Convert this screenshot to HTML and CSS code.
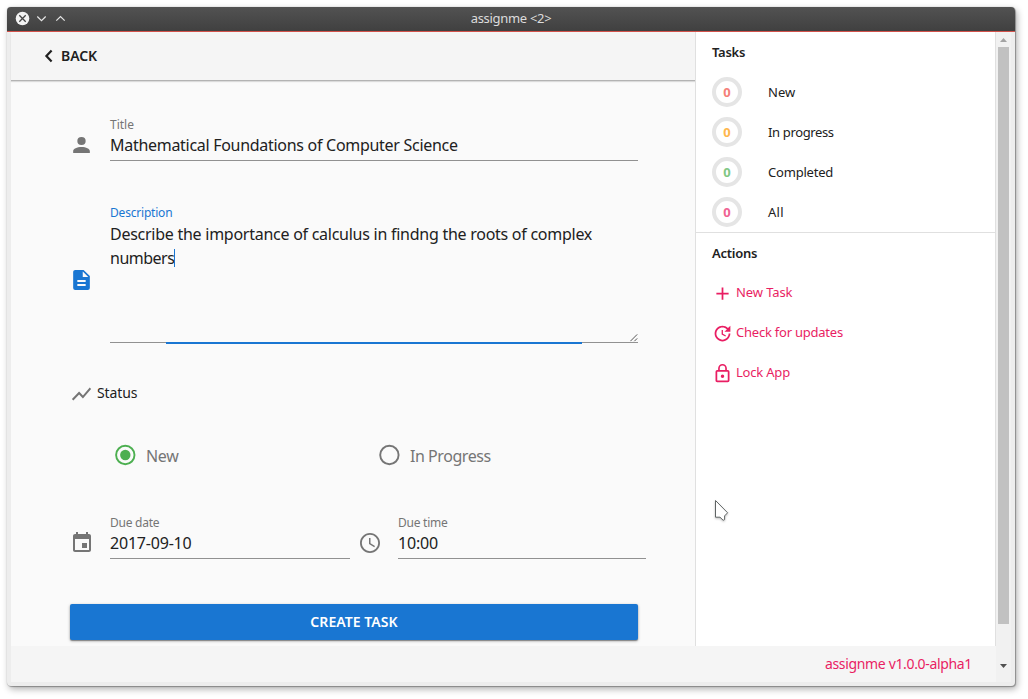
FILE: index.html
```html
<!DOCTYPE html>
<html lang="en">
<head>
<meta charset="utf-8">
<title>assignme</title>
<link rel="stylesheet" href="styles.css">
</head>
<body>
<div class="window">
  <div class="titlebar">
    <svg class="window-controls" width="60" height="24" viewBox="0 0 60 24">
      <circle cx="11.5" cy="11.5" r="6.8" fill="#f2f2f2"/>
      <path d="M8.3 8.3l6.4 6.4M14.7 8.3l-6.4 6.4" stroke="#444" stroke-width="1.3" fill="none"/>
      <path d="M26.3 9.5l4.2 4.2 4.2-4.2M45.3 13.7l4.2-4.2 4.2 4.2" stroke="#e6e6e6" stroke-width="1.2" fill="none"/>
    </svg>
    <span class="window-title">assignme &lt;2&gt;</span>
  </div>
  <div class="frame">
    <div class="app">
      <div class="columns">
        <main class="main">
          <header class="toolbar">
            <svg width="9" height="14" viewBox="0 0 9 14"><path d="M7.6 1.5L2.4 7l5.2 5.5" fill="none" stroke="#212121" stroke-width="2.2"/></svg>
            <span class="back">BACK</span>
          </header>
          <form class="form">
            <div class="row row-title">
              <svg class="icon" viewBox="0 0 24 24" preserveAspectRatio="none"><path d="M12 4a4 4 0 1 1 0 8 4 4 0 0 1 0-8M12 14c4.42 0 8 1.79 8 4v2H4v-2c0-2.21 3.58-4 8-4z"/></svg>
              <div class="field">
                <label class="label">Title</label>
                <div class="value tight">Mathematical Foundations of Computer Science</div>
              </div>
            </div>
            <div class="row row-description">
              <svg class="icon active" viewBox="0 0 24 24" preserveAspectRatio="none"><path fill-rule="evenodd" d="M6 2h8l6 6v12a2 2 0 0 1-2 2H6a2 2 0 0 1-2-2V4c0-1.1.9-2 2-2zM13.2 3.6V9h5.3zM8 12v2h8v-2zM8 16v2h8v-2z"/></svg>
              <div class="field focused">
                <label class="label">Description</label>
                <div class="value textarea tight">Describe the importance of calculus in findng the roots of complex<br><span class="last-word">numbers</span><span class="caret"></span></div>
                <svg class="resizer" width="8" height="8" viewBox="0 0 8 8"><path d="M.4 7.2L7.2.4M4.4 7.2l2.8-2.8" stroke="#555" stroke-width="1" fill="none"/></svg>
              </div>
            </div>
            <div class="status">
              <svg width="23" height="24" viewBox="0 0 24 24" preserveAspectRatio="none"><path fill="#757575" d="M3.5 18.49l6-6.01 4 4L22 6.92l-1.41-1.41-7.09 7.97-4-4L2 16.99z"/></svg>
              <span>Status</span>
            </div>
            <div class="radios">
              <div class="radio">
                <svg width="24" height="24" viewBox="0 0 24 24"><circle cx="12.3" cy="12" r="9.2" fill="none" stroke="#4caf50" stroke-width="1.9"/><circle cx="12.3" cy="12" r="5.2" fill="#4caf50"/></svg>
                <span class="new-option">New</span>
              </div>
              <div class="radio">
                <svg width="24" height="24" viewBox="0 0 24 24"><circle cx="12.4" cy="12" r="9.2" fill="none" stroke="#757575" stroke-width="1.9"/></svg>
                <span class="progress-option">In Progress</span>
              </div>
            </div>
            <div class="due">
              <div class="row row-date">
                <svg class="icon" viewBox="0 0 24 24"><path d="M17 12h-5v5h5v-5zM16 1v2H8V1H6v2H5c-1.11 0-1.99.9-1.99 2L3 19c0 1.1.89 2 2 2h14c1.1 0 2-.9 2-2V5c0-1.1-.9-2-2-2h-1V1h-2zm3 18H5V8h14v11z"/></svg>
                <div class="field">
                  <label class="label due-label">Due date</label>
                  <div class="value digits">2017-09-10</div>
                </div>
              </div>
              <div class="row row-time">
                <svg class="icon" viewBox="0 0 24 24"><path d="M11.99 2C6.47 2 2 6.48 2 12s4.47 10 9.99 10C17.52 22 22 17.52 22 12S17.52 2 11.99 2zM12 20.2a8.2 8.2 0 1 1 0-16.4 8.2 8.2 0 0 1 0 16.4zM12.5 7H11v6l5.25 3.15.75-1.23-4.5-2.67z"/></svg>
                <div class="field">
                  <label class="label due-label">Due time</label>
                  <div class="value digits">10:00</div>
                </div>
              </div>
            </div>
            <button class="submit" type="button">CREATE TASK</button>
          </form>
        </main>
        <aside class="sidebar">
          <section class="tasks">
            <h2 class="heading">Tasks</h2>
            <div class="task"><span class="count red">0</span><span>New</span></div>
            <div class="task"><span class="count orange">0</span><span class="progress-name">In progress</span></div>
            <div class="task"><span class="count green">0</span><span class="completed-name">Completed</span></div>
            <div class="task"><span class="count pink">0</span><span class="all-name">All</span></div>
          </section>
          <section class="actions">
            <h2 class="heading">Actions</h2>
            <a class="action"><svg viewBox="0 0 24 24"><path d="M19 13h-6v6h-2v-6H5v-2h6V5h2v6h6z"/></svg><span>New Task</span></a>
            <a class="action"><svg viewBox="0 0 24 24"><path d="M21 10.12h-6.78l2.74-2.82c-2.73-2.7-7.15-2.8-9.88-.1-2.73 2.71-2.73 7.08 0 9.79s7.15 2.71 9.88 0C18.32 15.65 19 14.08 19 12.1h2c0 1.98-.88 4.55-2.64 6.29-3.51 3.48-9.21 3.48-12.72 0-3.5-3.47-3.53-9.11-.02-12.58s9.14-3.47 12.65 0L21 3v7.12zM12.5 8v4.25l3.5 2.08-.72 1.21L11 13V8h1.5z"/></svg><span class="updates-name">Check for updates</span></a>
            <a class="action"><svg viewBox="0 0 24 24"><path d="M12 17a2 2 0 1 0 0-4 2 2 0 0 0 0 4zM18 8h-1V6A5 5 0 0 0 7 6v2H6a2 2 0 0 0-2 2v10c0 1.1.9 2 2 2h12a2 2 0 0 0 2-2V10a2 2 0 0 0-2-2zM8.9 6a3.1 3.1 0 0 1 6.2 0v2H8.9zM18 20H6V10h12z"/></svg><span class="lock-name">Lock App</span></a>
          </section>
        </aside>
      </div>
      <footer class="footer">assignme v1.0.0-alpha1</footer>
    </div>
    <div class="scrollbar">
      <svg width="15" height="15" viewBox="0 0 15 15"><path d="M4 10l3.5-4 3.5 4z" fill="#a3a3a3"/></svg>
      <div class="thumb"></div>
      <svg width="15" height="15" viewBox="0 0 15 15"><path d="M4 5l3.5 4L11 5z" fill="#505050"/></svg>
    </div>
  </div>
</div>
<svg class="pointer" width="18" height="26" viewBox="0 0 18 26"><path d="M2.5 2.5V19.2H7L10.2 22.3 11.6 21.6V17.9L14.6 14.8Z" fill="#fff" stroke="#5f6464" stroke-width="1"/></svg>
</body>
</html>
```
FILE: styles.css
```css
* { box-sizing: border-box; }

body {
  margin: 0;
  width: 1028px;
  height: 699px;
  padding: 7px 13px 13px 7px;
  overflow: hidden;
  background: #fff;
  color: #212121;
  font-family: "Noto Sans", "Open Sans", sans-serif;
}

svg { display: block; flex: none; }

.window {
  display: flex;
  flex-direction: column;
  width: 1008px;
  height: 679px;
  border-radius: 4px;
  background: #ededed;
  box-shadow: 0 0 1px #999, 1px 1px 1px rgba(0, 0, 0, .3), 2px 3px 7px rgba(0, 0, 0, .32);
}

.titlebar {
  display: grid;
  grid-template-columns: 60px 1fr 60px;
  height: 25px;
  padding: 0 4px;
  border-bottom: 1px solid #d2524b;
  border-radius: 4px 4px 0 0;
  background: linear-gradient(#525252, #404040);
}

.window-title {
  color: #dcdcdc;
  font-size: 13px;
  line-height: 23px;
  letter-spacing: -.3px;
  text-align: center;
}

.frame {
  display: flex;
  flex: 1;
  padding: 0 4px 4px;
}

.app {
  display: flex;
  flex-direction: column;
  width: 985px;
  height: 650px;
}

.columns { display: flex; height: 614px; }

.main { width: 684px; background: #fafafa; }

.toolbar {
  display: flex;
  align-items: center;
  gap: 8px;
  height: 48px;
  padding-left: 33px;
  background: #f5f5f5;
  box-shadow: 0 1px 0 #b3b3b3, 0 2px 1px rgba(0, 0, 0, .12);
}

.back { padding-bottom: 2px; font-size: 14px; font-weight: 600; letter-spacing: -.1px; }

.form { padding: 36px 0 0 59px; }

.row { display: grid; grid-template-columns: 25px 1fr; column-gap: 15px; }
.row-title { width: 568px; }

.icon { width: 25px; height: 24px; fill: #757575; }
.icon.active { fill: #1976d2; }
.row-title .icon { margin: 17px 0 0 -1px; }
.row-description .icon { margin: 64px 0 0 -1px; }

.field { position: relative; border-bottom: 1px solid #919191; }
.label {
  display: block;
  height: 16px;
  color: #757575;
  font-size: 12px;
  line-height: 18px;
}
.value { height: 24px; margin: 1px 0 3px; font-size: 16px; line-height: 24px; white-space: nowrap; }
.tight { letter-spacing: -.29px; }
.digits { letter-spacing: -.2px; }
.due-label { letter-spacing: -.25px; }

.row-description { width: 568px; margin-top: 43px; }
.focused .label { color: #1976d2; letter-spacing: -.2px; }
.value.textarea { height: 118px; margin: 2px 0; letter-spacing: -.26px; }
.last-word { letter-spacing: -.5px; }

/* Focus line growing out from the centre */
.focused::after {
  content: "";
  position: absolute;
  left: 56px;
  right: 56px;
  bottom: -2px;
  height: 2px;
  background: #1976d2;
}

.caret {
  display: inline-block;
  width: 1px;
  height: 18px;
  background: #1976d2;
  vertical-align: -3px;
}

.resizer { position: absolute; right: 0; bottom: 0; }

.status {
  display: flex;
  align-items: center;
  gap: 4px;
  height: 24px;
  margin-top: 38px;
  font-size: 14px;
  letter-spacing: -.1px;
}
.status svg { margin-top: 2px; }
.status span { line-height: 24px; }

.radios {
  display: grid;
  grid-template-columns: 264px 264px;
  margin: 38px 0 0 43px;
}
.radio { display: flex; gap: 9px; color: #757575; font-size: 16px; line-height: 26px; }
.new-option { letter-spacing: -.3px; }
.progress-option { letter-spacing: -.45px; }

.due { display: flex; margin-top: 45px; gap: 8px; }
.due .icon { width: 24px; margin: 17px 0 0; }
.row-date { width: 280px; }
.row-time { width: 288px; }
.row-time .icon { margin: 17px 0 0 -.5px; }
.row-date .icon { margin-left: -.5px; }

.submit {
  display: block;
  width: 568px;
  height: 36px;
  margin-top: 45px;
  padding: 0;
  border: 0;
  border-radius: 2px;
  background: #1976d2;
  box-shadow: 0 1px 3px rgba(0, 0, 0, .35), 0 1px 1px rgba(0, 0, 0, .3);
  color: #fff;
  font: 600 14px/36px "Noto Sans", sans-serif;
  letter-spacing: .05px;
}

.sidebar {
  width: 301px;
  border: solid #e0e0e0;
  border-width: 0 1px;
  background: #fff;
}

.tasks { height: 201px; border-bottom: 1px solid #e0e0e0; }

.heading {
  height: 40px;
  margin: 0;
  padding-left: 16px;
  font-size: 13px;
  font-weight: 600;
  line-height: 40px;
  letter-spacing: -.25px;
}

.actions .heading { height: 39px; }

.task {
  display: grid;
  grid-template-columns: 30px 1fr;
  column-gap: 26px;
  align-items: center;
  height: 40px;
  padding-left: 16px;
  font-size: 13px;
}
.count {
  height: 30px;
  border: 4px solid #e5e5e5;
  border-radius: 50%;
  font-weight: 700;
  line-height: 22px;
  text-align: center;
}
.red { color: #f58078; }
.orange { color: #ffb74d; }
.green { color: #81c784; }
.pink { color: #f06292; }
.progress-name { letter-spacing: -.36px; }
.completed-name { letter-spacing: -.2px; }
.all-name { letter-spacing: .3px; }

.action {
  display: flex;
  align-items: center;
  gap: 3px;
  height: 40px;
  padding-left: 16px;
  color: #e91e63;
  font-size: 13px;
  letter-spacing: -.1px;
}
.action svg { width: 21px; height: 21px; margin-top: 2px; fill: #e91e63; }
.updates-name { letter-spacing: -.23px; }
.lock-name { letter-spacing: -.2px; }

.footer {
  height: 36px;
  padding-right: 24px;
  background: #f5f5f5;
  color: #e91e63;
  font-size: 14px;
  line-height: 36px;
  letter-spacing: -.34px;
  text-align: right;
}

.scrollbar { width: 15px; height: 650px; background: #f1f1f1; }
.thumb { width: 11px; height: 577px; margin: 0 2px 41px; background: #c1c1c1; }
.scrollbar svg:last-child { margin-top: -6px; }

.pointer {
  position: absolute;
  left: 713px;
  top: 498px;
  filter: drop-shadow(0 1px 1px rgba(0, 0, 0, .25));
}
```
